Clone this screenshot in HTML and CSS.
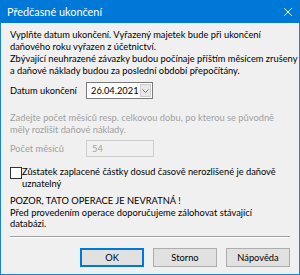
FILE: index.html
```html
<!DOCTYPE html>
<html>
	<head>
		<meta charset="UTF-8">
		<title>Předčasné ukončení</title>
		<link rel="stylesheet" href="styles.css">
	</head>
	<body>
		<!-- okno dialogu -->
		<div class="window">
			<div class="titlebar">
				<span class="title">Předčasné ukončení</span>
				<svg class="close" width="8" height="8" viewBox="0 0 8 8">
					<path d="M0.3 0.3 L7.7 7.7 M7.7 0.3 L0.3 7.7" stroke="#fff" stroke-width="1" fill="none"/>
				</svg>
			</div>

			<div class="content">
				<p class="info">Vyplňte datum ukončení. Vyřazený majetek bude při ukončení<br>daňového roku vyřazen z účetnictví.</p>
				<p class="info">Zbývající neuhrazené závazky budou počínaje příštím měsícem zrušeny<br>a daňové náklady budou za poslední období přepočítány.</p>

				<div class="row date-row">
					<span class="label">Datum ukončení</span>
					<div class="combo">
						<span class="combo-value">26.04.2021</span>
						<span class="combo-btn">
							<svg width="7" height="4" viewBox="0 0 7 4">
								<path d="M0.5 0.5 L3.5 3.5 L6.5 0.5" stroke="#707070" fill="none"/>
							</svg>
						</span>
					</div>
				</div>

				<p class="disabled hint">Zadejte počet měsíců resp. celkovou dobu, po kterou se původně<br>měly rozlišit daňové náklady.</p>

				<div class="row count-row">
					<span class="label disabled">Počet měsíců</span>
					<div class="edit">54</div>
				</div>

				<div class="check">
					<span class="box"></span>
					<span>Zůstatek zaplacené částky dosud časově nerozlišené je daňově<br>uznatelný</span>
				</div>

				<p class="warn">POZOR, TATO OPERACE JE NEVRATNÁ !<br>Před provedením operace doporučujeme zálohovat stávající<br>databázi.</p>

				<div class="sep"></div>

				<div class="buttons">
					<a class="btn default" href="javascript:;">OK</a>
					<a class="btn" href="javascript:;">Storno</a>
					<a class="btn" href="javascript:;">Nápověda</a>
				</div>
			</div>
		</div>
	</body>
</html>
```

FILE: styles.css
```css
*{
	margin: 0;
	padding: 0;
	box-sizing: border-box;
}

body{
	width: 300px;
	height: 275px;
	font-family: Lato, "Noto Sans", sans-serif;
	font-size: 9.3px;
	color: #000;
	overflow: hidden;
	white-space: nowrap;
}

/*okno*/
.window{
	width: 300px;
	height: 275px;
	display: flex;
	flex-direction: column;
	border: 1px solid #1c84d8;
	border-top: none;
	background-color: #f0f0f0;
}

.titlebar{
	flex: none;
	height: 23px;
	background-color: #0078d7;
	display: flex;
	align-items: center;
	justify-content: space-between;
	padding: 0 8px 0 7px;
	margin: 0 -1px;
	color: #fff;
}

.title{
	font-size: 10.9px;
}

.content{
	flex: 1;
	padding: 6px 9px 0 9px;
	display: flex;
	flex-direction: column;
}

.info{
	line-height: 11.5px;
}

.info + .info{
	margin-top: 1px;
}

.row{
	display: flex;
	align-items: center;
	height: 17px;
}

.date-row{
	margin-top: 6px;
}

.count-row{
	margin-top: 4px;
}

.label{
	width: 76px;
}

.disabled{
	color: #a0a0a0;
}

/*combobox*/
.combo{
	width: 67px;
	height: 17px;
	border: 1px solid #7a7a7a;
	background-color: #fff;
	display: flex;
	align-items: center;
}

.combo-value{
	flex: 1;
	padding-left: 4px;
}

.combo-btn{
	width: 11px;
	height: 13px;
	margin-right: 1px;
	background-color: #e8e8e8;
	border: 1px solid #d0d0d0;
	display: flex;
	align-items: center;
	justify-content: center;
}

.hint{
	margin-top: 13px;
	line-height: 12px;
}

.edit{
	width: 68px;
	height: 17px;
	border: 1px solid #cccccc;
	background-color: #f0f0f0;
	color: #a0a0a0;
	padding-left: 5px;
	display: flex;
	align-items: center;
}

/*checkbox*/
.check{
	display: flex;
	align-items: flex-start;
	line-height: 11.5px;
	margin-top: 9px;
}

.box{
	flex: none;
	width: 12px;
	height: 12px;
	border: 1px solid #333;
	background-color: #fff;
	margin: 1px 0 0 0;
}

.warn{
	margin-top: 6px;
	line-height: 11.5px;
}

.sep{
	height: 2px;
	border-top: 1px solid #a0a0a0;
	border-bottom: 1px solid #fff;
	margin-top: 6px;
}

/*tlacitka*/
.buttons{
	display: flex;
	justify-content: flex-end;
	gap: 9px;
	margin-top: 10px;
}

.btn{
	width: 64px;
	height: 19px;
	border: 1px solid #adadad;
	background-color: #e1e1e1;
	color: #000;
	text-decoration: none;
	display: flex;
	align-items: center;
	justify-content: center;
}

.btn.default{
	border: 2px solid #0078d7;
}
```
